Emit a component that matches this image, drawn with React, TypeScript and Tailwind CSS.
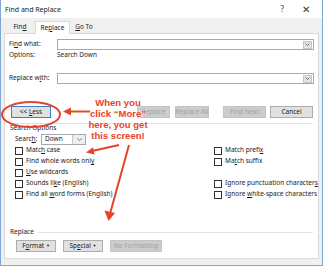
import React from "react";

const ui = "font-['Noto_Sans',sans-serif] text-[6.5px] leading-none text-[#1b1b1b] whitespace-nowrap";

function U({ children }: { children: React.ReactNode }) {
  return <span className="underline underline-offset-1">{children}</span>;
}

function Chevron() {
  return (
    <svg width="5" height="3" viewBox="0 0 5 3">
      <path d="M0.5 0.5 L2.5 2.5 L4.5 0.5" fill="none" stroke="#555" strokeWidth="0.8" />
    </svg>
  );
}

function Combo({ className }: { className: string }) {
  return (
    <div className={`flex items-center justify-end h-[11px] bg-white border border-[#a9a9a9] ${className}`}>
      <div className="flex items-center justify-center w-[9px] h-[8px] mr-[1px] bg-[#e3e3e3] border border-[#c6c6c6]">
        <Chevron />
      </div>
    </div>
  );
}

function Btn({ children, w, off, focus }: { children: React.ReactNode; w: string; off?: boolean; focus?: boolean }) {
  const look = off
    ? "bg-[#cccccc] border-[#c4c4c4] text-[#a3a3a3]"
    : focus
    ? "bg-[#e1e1e1] border-[#3c7fc4] text-[#1b1b1b]"
    : "bg-[#e1e1e1] border-[#adadad] text-[#1b1b1b]";
  return (
    <div className={`flex items-center justify-center h-[12px] border ${w} ${look}`}>
      <span>{children}</span>
    </div>
  );
}

function Check({ children }: { children: React.ReactNode }) {
  return (
    <div className="flex items-center h-[11px] gap-[3px]">
      <div className="w-[8px] h-[8px] border border-[#333] bg-white" />
      <span>{children}</span>
    </div>
  );
}

function Annotations() {
  const red = "#e5432b";
  return (
    <>
      <svg className="absolute inset-0 pointer-events-none" width="323" height="266" viewBox="0 0 323 266">
        <ellipse cx="30" cy="114.5" rx="29" ry="12.5" fill="none" stroke={red} strokeWidth="2" />
        <line x1="89" y1="111.5" x2="68" y2="111.5" stroke={red} strokeWidth="2" />
        <path d="M62 111.5 L70 107.5 L70 115.5 Z" fill={red} />
        <line x1="118" y1="145" x2="91" y2="151" stroke={red} strokeWidth="2" />
        <path d="M85 152.5 L92 147.2 L93.5 154.6 Z" fill={red} />
        <line x1="128" y1="145" x2="109.5" y2="212" stroke={red} strokeWidth="2" />
        <path d="M107.5 221 L103.5 210.5 L114 213 Z" fill={red} />
      </svg>
      <div className="absolute left-[82px] top-[97px] w-[70px] text-center font-['Liberation_Sans',Arial,sans-serif] font-bold text-[9.5px] leading-[11px] text-[#e5432b] whitespace-nowrap [text-shadow:0_0_2px_#fff,0_0_2px_#fff]">
        When you
        <br />
        click “More”
        <br />
        here, you get
        <br />
        this screen!
      </div>
    </>
  );
}

export default function App() {
  return (
    <div className={`relative w-[323px] h-[266px] overflow-hidden flex flex-col bg-[#f0f0f0] border-x border-b border-[#7ea6d6] ${ui}`}>
      {/* title bar */}
      <div className="flex items-center h-[18px] bg-white pl-[4px] pr-[12px] text-[7px]">
        <span>Find and Replace</span>
        <span className="ml-auto text-[8px] text-[#333]">?</span>
        <span className="ml-[18px] text-[10px] font-light text-[#333]">✕</span>
      </div>

      {/* tabs */}
      <div className="flex items-end h-[15px] pl-[4px] pr-[4px]">
        <div className="flex items-center justify-center w-[30px] h-[12px]">
          <span>
            Fin<U>d</U>
          </span>
        </div>
        <div className="flex items-center justify-center w-[35px] h-[13px] bg-white border-x border-t border-[#d9d9d9] -mb-px relative z-10">
          <span>
            Re<U>p</U>lace
          </span>
        </div>
        <div className="flex items-center justify-center w-[28px] h-[12px]">
          <span>
            <U>G</U>o To
          </span>
        </div>
      </div>

      {/* panel */}
      <div className="mx-[3px] bg-white border border-[#d9d9d9] flex flex-col pb-[6px]">
        <div className="flex items-center mt-[5px] pl-[4px] pr-[4px]">
          <span className="w-[48px]">
            Fi<U>n</U>d what:
          </span>
          <Combo className="flex-1" />
        </div>
        <div className="flex items-center h-[10px] pl-[4px]">
          <span className="w-[48px]">Options:</span>
          <span>Search Down</span>
        </div>
        <div className="flex items-center mt-[13px] pl-[4px] pr-[4px]">
          <span className="w-[48px]">
            Replace w<U>i</U>th:
          </span>
          <Combo className="flex-1" />
        </div>

        {/* action buttons */}
        <div className="flex items-center mt-[22px] pl-[6px] pr-[5px]">
          <Btn w="w-[40px]" focus>
            &lt;&lt; <U>L</U>ess
          </Btn>
          <div className="ml-auto flex items-center">
            <Btn w="w-[33px]" off>
              Replace
            </Btn>
            <div className="w-[5px]" />
            <Btn w="w-[34px]" off>
              Replace All
            </Btn>
            <div className="w-[14px]" />
            <Btn w="w-[43px]" off>
              Find Next
            </Btn>
            <div className="w-[4px]" />
            <Btn w="w-[43px]">Cancel</Btn>
          </div>
        </div>
        <div className="mt-[5px] mx-[5px] h-px bg-[#e3e3e3]" />

        <div className="flex items-center h-[8px] pl-[5px]">Search Options</div>
        <div className="flex items-center mt-[2px] pl-[10px]">
          <span className="w-[26px]">
            Searc<U>h</U>;
          </span>
          <div className="flex items-center w-[45px] h-[11px] border border-[#a9a9a9] bg-white">
            <span className="flex-1 pl-[3px]">Down</span>
            <div className="flex items-center justify-center w-[13px] h-full border-l border-[#c6c6c6] bg-[#eeeeee]">
              <Chevron />
            </div>
          </div>
        </div>

        <div className="grid grid-cols-[199px_1fr] pl-[10px]">
          <Check>
            Matc<U>h</U> case
          </Check>
          <Check>
            Match prefi<U>x</U>
          </Check>
          <Check>
            Find whole words onl<U>y</U>
          </Check>
          <Check>
            Ma<U>t</U>ch suffix
          </Check>
          <Check>
            <U>U</U>se wildcards
          </Check>
          <div />
          <Check>
            Sounds li<U>k</U>e (English)
          </Check>
          <Check>
            Ignore punctuation character<U>s</U>
          </Check>
          <Check>
            Find all <U>w</U>ord forms (English)
          </Check>
          <Check>
            Ignore <U>w</U>hite-space characters
          </Check>
        </div>

        <div className="flex items-center h-[8px] mt-[28px] pl-[5px] pr-[5px] gap-[4px]">
          <span>Replace</span>
          <div className="flex-1 h-px bg-[#e3e3e3]" />
        </div>
        <div className="flex items-center mt-[4px] pl-[11px] gap-[7px]">
          <Btn w="w-[40px]">
            F<U>o</U>rmat <span className="text-[4px] align-middle">▼</span>
          </Btn>
          <Btn w="w-[40px]">
            Sp<U>e</U>cial <span className="text-[4px] align-middle">▼</span>
          </Btn>
          <Btn w="w-[52px]" off>
            No Formatting
          </Btn>
        </div>
      </div>

      <Annotations />
    </div>
  );
}
